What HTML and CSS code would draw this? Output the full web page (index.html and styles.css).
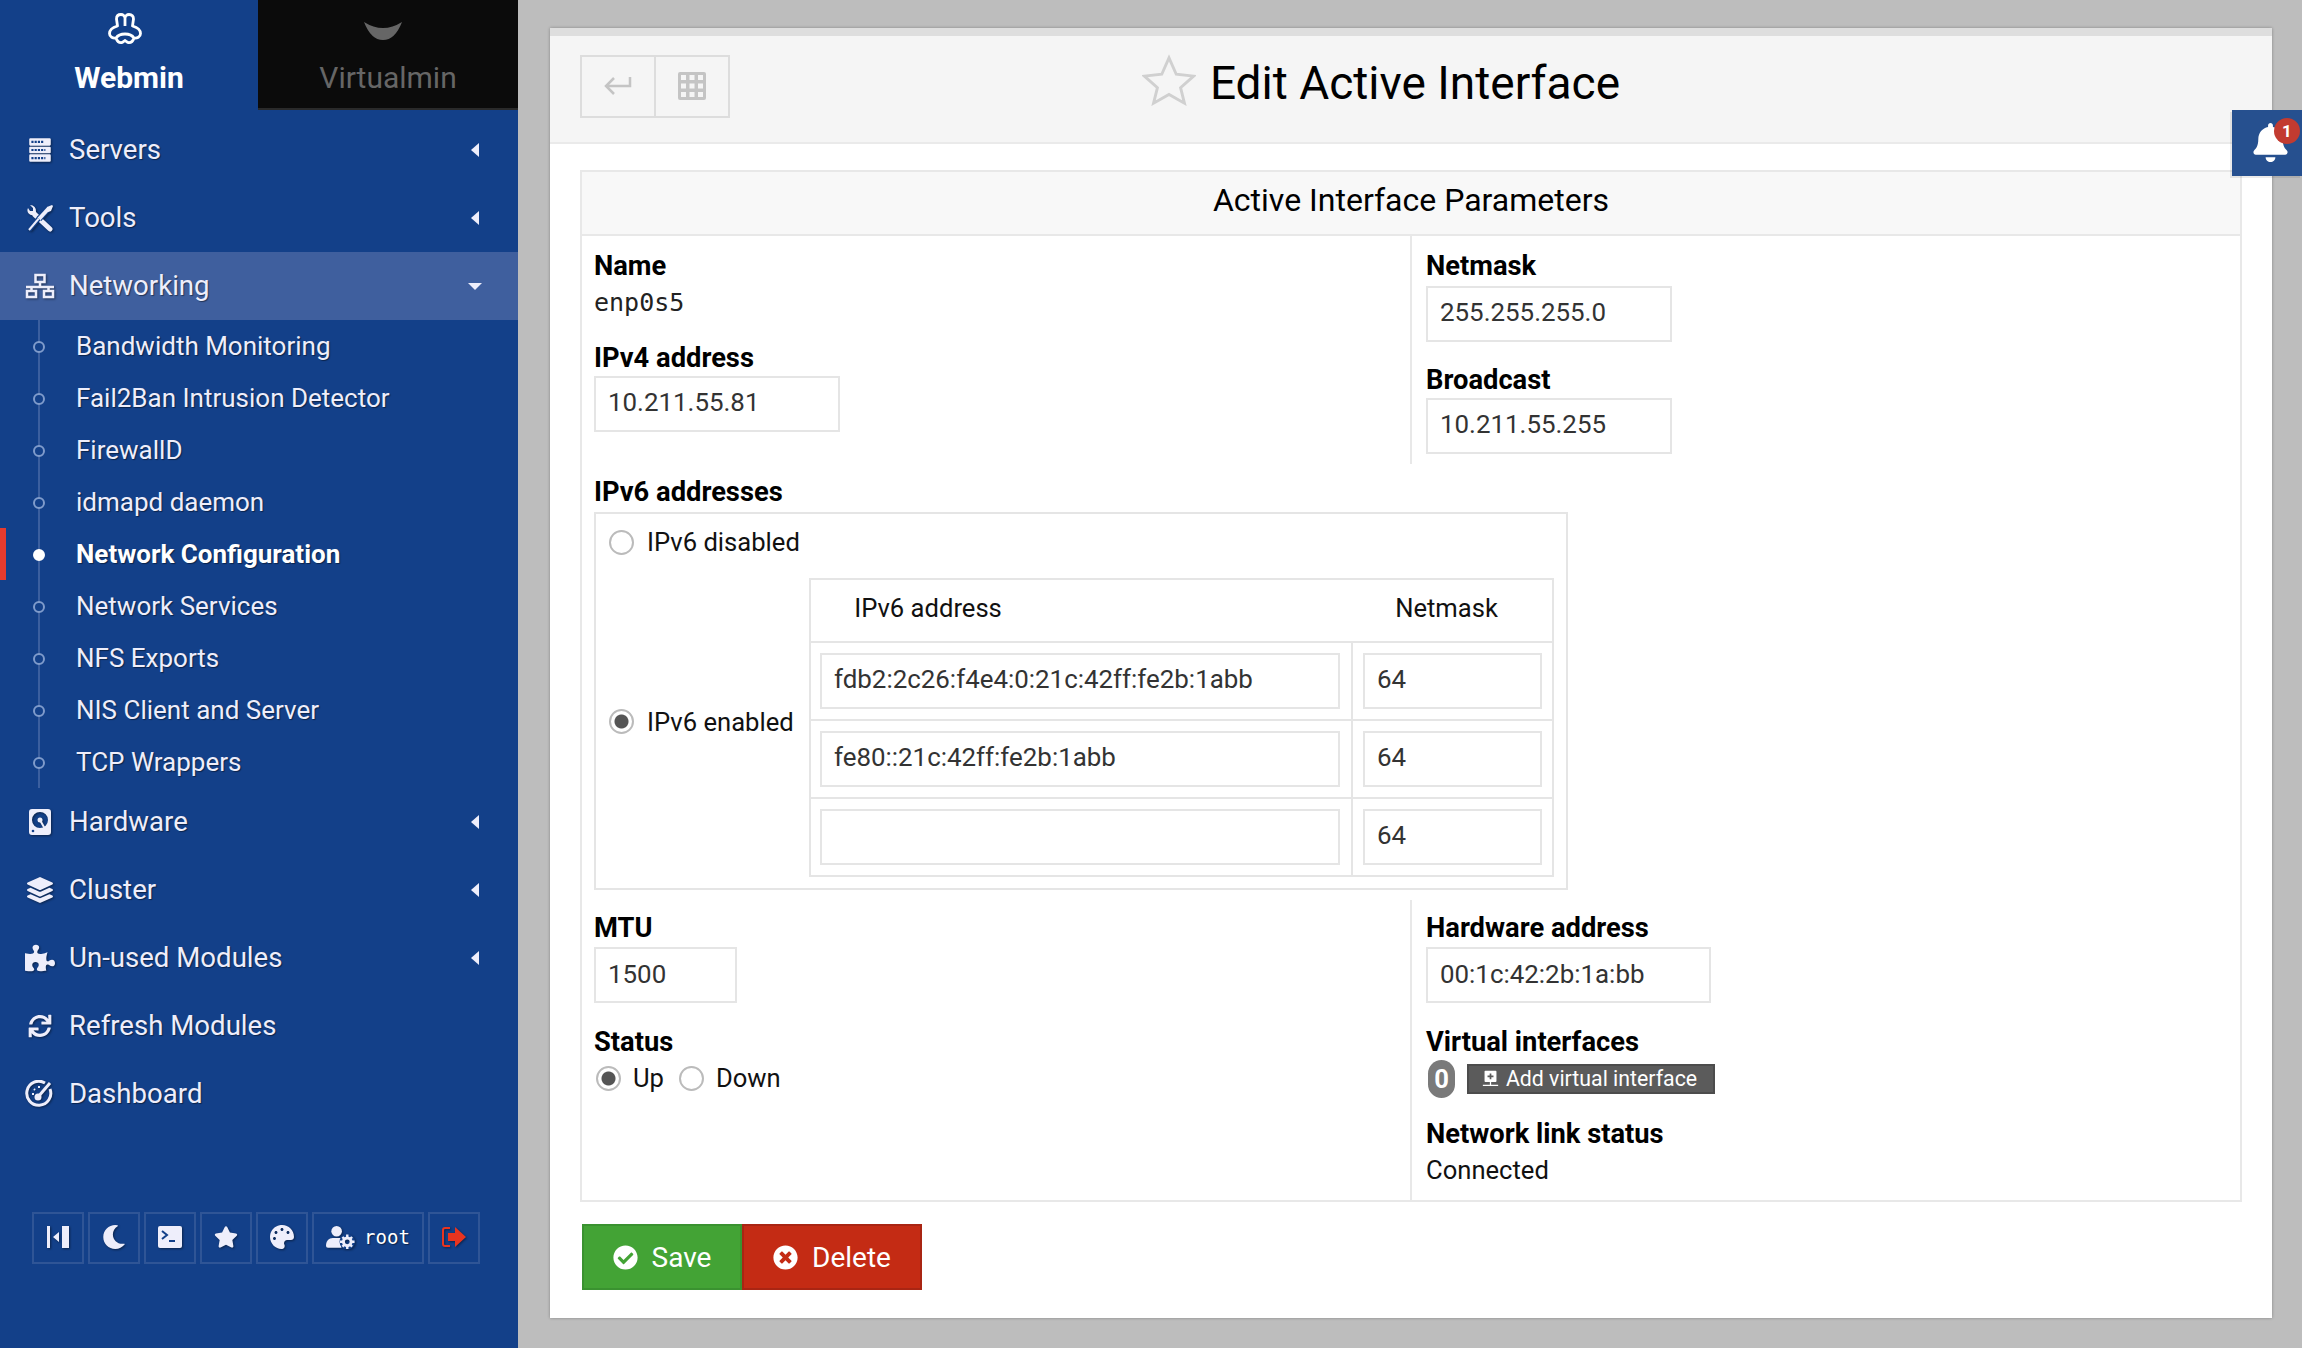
FILE: index.html
```html
<!DOCTYPE html>
<html lang="en">
<head>
    <meta charset="UTF-8">
    <title>Edit Active Interface</title>
    <link rel="stylesheet" href="styles.css">
</head>
<body>
    <aside class="sidebar">
        <div class="switch">
            <div class="switch-tab switch-active">
                <svg class="switch-logo" viewBox="0 0 34 32"><path d="M17 5C17 3 15 1.500 13 1.500C10 1.500 8.500 3.500 8.500 6L9.500 13C6 14 1.500 16 1.500 20.500C1.500 24 5 25.500 8 25C9 28 11 30 14 29.500C15.500 29 16 28 17 27.500C18 28 18.500 29 20 29.500C23 30 25 28 26 25C29 25.500 32.500 24 32.500 20.500C32.500 16 28 14 24.500 13L25.500 6C25.500 3.500 24 1.500 21 1.500C19 1.500 17 3 17 5zM17 5V13M8 25C10 22 13 21 17 21C21 21 24 22 26 25" fill="none" stroke="#fff" stroke-width="2.800" stroke-linejoin="round"/></svg>
                <span>Webmin</span>
            </div>
            <div class="switch-tab switch-other">
                <svg class="switch-logo" viewBox="0 0 38 18"><path d="M0 0Q19 12 38 0Q31 18 19 18Q7 18 0 0z" fill="#666"/></svg>
                <span>Virtualmin</span>
            </div>
        </div>

        <ul class="menu">
            <li class="menu-item">
                <svg class="menu-icon" viewBox="-1 -1 26 26"><path d="M3 1h18a1 1 0 0 1 1 1v5a1 1 0 0 1-1 1H3a1 1 0 0 1-1-1V2a1 1 0 0 1 1-1zm0 8h18a1 1 0 0 1 1 1v4a1 1 0 0 1-1 1H3a1 1 0 0 1-1-1v-4a1 1 0 0 1 1-1zm0 7h18a1 1 0 0 1 1 1v5a1 1 0 0 1-1 1H3a1 1 0 0 1-1-1v-5a1 1 0 0 1 1-1z" fill="currentColor"/><path d="M4 4.500h11M4 12h13M4 19.500h13" stroke="#134089" stroke-width="2" stroke-dasharray="2 1"/></svg>
                <span class="menu-label">Servers</span><i class="arrow-left"></i>
            </li>
            <li class="menu-item">
                <svg class="menu-icon" viewBox="0 0 28 28"><path d="M9 11L24 25" stroke="currentColor" stroke-width="5" stroke-linecap="round"/><path d="M2 4a5 5 0 0 0 6 7l4 3 2-2-4-4a6 6 0 0 0-6-7l3 3v3H4z" fill="currentColor"/><path d="M14 13L3 26" stroke="#134089" stroke-width="5"/><path d="M14 13L3 26" stroke="currentColor" stroke-width="2"/><path d="M13 15L23 4" stroke="#134089" stroke-width="6"/><path d="M13 15L23 4" stroke="currentColor" stroke-width="4"/><path d="M21 3l5-2 1 1-2 5-3 1z" fill="currentColor"/></svg>
                <span class="menu-label">Tools</span><i class="arrow-left"></i>
            </li>
            <li class="menu-item menu-open">
                <svg class="menu-icon" viewBox="0 0 30 26"><path d="M10.500 2h9v7h-9zM2 18h9v6H2zM19 18h9v6h-9zM15 9v5M1 14h28M6.500 14v4M23.500 14v4" fill="none" stroke="currentColor" stroke-width="2.500"/></svg>
                <span class="menu-label">Networking</span><i class="arrow-down"></i>
            </li>
            <li>
                <ul class="submenu">
                    <li class="submenu-item">Bandwidth Monitoring</li>
                    <li class="submenu-item">Fail2Ban Intrusion Detector</li>
                    <li class="submenu-item">FirewallD</li>
                    <li class="submenu-item">idmapd daemon</li>
                    <li class="submenu-item submenu-current">Network Configuration</li>
                    <li class="submenu-item">Network Services</li>
                    <li class="submenu-item">NFS Exports</li>
                    <li class="submenu-item">NIS Client and Server</li>
                    <li class="submenu-item">TCP Wrappers</li>
                </ul>
            </li>
            <li class="menu-item">
                <svg class="menu-icon" viewBox="-1 -1 24 28"><path d="M3 0h16a3 3 0 0 1 3 3v20a3 3 0 0 1-3 3H3a3 3 0 0 1-3-3V3a3 3 0 0 1 3-3zm8 3a8 8 0 1 0 0 16 8 8 0 0 0 0-16z" fill="currentColor" fill-rule="evenodd"/><circle cx="11" cy="11" r="2.500" fill="currentColor"/><path d="M11 11l5 9" stroke="currentColor" stroke-width="2"/><circle cx="4" cy="22" r="1.300" fill="#134089"/></svg>
                <span class="menu-label">Hardware</span><i class="arrow-left"></i>
            </li>
            <li class="menu-item">
                <svg class="menu-icon" viewBox="-20 -20 552 552"><path d="M12.410 148.020l232.940 105.670c6.800 3.090 14.490 3.090 21.290 0l232.940-105.670c16.550-7.510 16.550-32.520 0-40.030L266.650 2.310a25.607 25.607 0 0 0-21.290 0L12.410 107.980c-16.550 7.510-16.550 32.530 0 40.040zm487.180 88.280l-58.090-26.330-161.640 73.270c-7.560 3.430-15.590 5.170-23.860 5.170s-16.290-1.740-23.860-5.170L70.510 209.970l-58.100 26.330c-16.550 7.500-16.550 32.500 0 40l232.940 105.590c6.800 3.080 14.490 3.080 21.290 0L499.590 276.300c16.550-7.500 16.550-32.500 0-40zm0 127.800l-57.870-26.230-161.860 73.370c-7.560 3.430-15.590 5.170-23.860 5.170s-16.290-1.740-23.860-5.170L70.290 337.870 12.410 364.100c-16.550 7.500-16.550 32.500 0 40l232.940 105.590c6.800 3.080 14.490 3.080 21.290 0L499.590 404.100c16.550-7.500 16.550-32.500 0-40z" fill="currentColor"/></svg>
                <span class="menu-label">Cluster</span><i class="arrow-left"></i>
            </li>
            <li class="menu-item">
                <svg class="menu-icon" viewBox="0 0 576 512"><path d="M519.442 288.651c-41.519 0-59.500 31.593-82.058 31.593C377.409 320.244 432 144 432 144s-196.288 80-196.288-3.297c0-35.827 36.288-46.250 36.288-85.985C272 19.216 243.885 0 210.539 0c-34.654 0-66.366 18.891-66.366 56.346 0 41.364 31.711 59.277 31.711 81.750C175.885 207.719 0 166.758 0 166.758v333.237s178.635 41.047 178.635-28.662c0-22.473-40-40.107-40-81.471 0-37.456 29.250-56.346 63.577-56.346 33.673 0 61.788 19.216 61.788 54.717 0 39.735-36.288 50.158-36.288 85.985 0 60.803 129.675 25.730 181.230 25.730 0 0-34.725-120.101 25.827-120.101 35.962 0 46.423 36.152 86.308 36.152C556.712 416 576 387.990 576 354.443c0-34.199-18.962-65.792-56.558-65.792z" fill="currentColor"/></svg>
                <span class="menu-label">Un-used Modules</span><i class="arrow-left"></i>
            </li>
            <li class="menu-item">
                <svg class="menu-icon" viewBox="-60 -60 632 632"><path d="M440.650 12.570l4 82.770A247.160 247.160 0 0 0 255.830 8C134.730 8 33.910 94.920 12.290 209.820A12 12 0 0 0 24.090 224h49.050a12 12 0 0 0 11.670-9.260 175.910 175.910 0 0 1 317-56.940l-101.460-4.860a12 12 0 0 0-12.570 12v47.410a12 12 0 0 0 12 12H500a12 12 0 0 0 12-12V12a12 12 0 0 0-12-12h-47.370a12 12 0 0 0-11.980 12.570zM255.830 432a175.610 175.610 0 0 1-146-77.800l101.800 4.870a12 12 0 0 0 12.570-12v-47.400a12 12 0 0 0-12-12H12a12 12 0 0 0-12 12V500a12 12 0 0 0 12 12h47.350a12 12 0 0 0 12-12.600l-4.150-82.570A247.170 247.170 0 0 0 255.830 504c121.110 0 221.930-86.920 243.550-201.820a12 12 0 0 0-11.800-14.180h-49.050a12 12 0 0 0-11.670 9.260A175.860 175.860 0 0 1 255.830 432z" fill="currentColor"/></svg>
                <span class="menu-label">Refresh Modules</span>
            </li>
            <li class="menu-item">
                <svg class="menu-icon" viewBox="0 0 28 28"><path d="M24 9a12 12 0 1 1-5-6" fill="none" stroke="currentColor" stroke-width="3"/><path d="M12 17L24 3" stroke="currentColor" stroke-width="3"/><circle cx="12" cy="17" r="3.500" fill="currentColor"/><path d="M6 14h2M8 9l1 1M13 6v2" stroke="currentColor" stroke-width="2"/></svg>
                <span class="menu-label">Dashboard</span>
            </li>
        </ul>

        <div class="toolbar">
            <div class="tool">
                <svg class="tool-icon" viewBox="0 0 24 24"><path d="M1 1h3v22H1zM16 1h7v22h-7zM13 7v10L7 12z" fill="currentColor"/></svg>
            </div>
            <div class="tool">
                <svg class="tool-icon" viewBox="0 0 512 512"><path d="M283.211 512c78.962 0 151.079-35.925 198.857-94.792 7.068-8.708-.639-21.430-11.562-19.350-124.203 23.654-238.262-71.576-238.262-196.954 0-72.222 38.662-138.635 101.498-174.394 9.686-5.512 7.250-20.197-3.756-22.230A258.156 258.156 0 0 0 283.211 0c-141.309 0-256 114.511-256 256 0 141.309 114.511 256 256 256z" fill="currentColor"/></svg>
            </div>
            <div class="tool">
                <svg class="tool-icon" viewBox="0 0 24 24"><rect width="24" height="22" y="1" rx="2" fill="currentColor"/><path d="M4 6l5 4-5 4M11 16h6" fill="none" stroke="#134089" stroke-width="2"/></svg>
            </div>
            <div class="tool">
                <svg class="tool-icon" viewBox="0 0 576 512"><path d="M259.300 17.800L194 150.200 47.900 171.500c-26.200 3.800-36.700 36.100-17.700 54.600l105.700 103-25 145.500c-4.500 26.300 23.200 46 46.400 33.700L288 439.600l130.700 68.700c23.200 12.200 50.900-7.400 46.400-33.700l-25-145.500 105.700-103c19-18.500 8.500-50.800-17.700-54.600L382 150.200 316.700 17.800c-11.700-23.600-45.600-23.900-57.400 0z" fill="currentColor"/></svg>
            </div>
            <div class="tool">
                <svg class="tool-icon" viewBox="0 0 512 512"><path d="M204.300 5C104.900 24.400 24.800 104.300 5.200 203.400c-37 187 131.700 326.400 258.800 306.700 41.200-6.400 61.400-54.600 42.500-91.700-23.100-45.400 9.900-98.400 60.900-98.400h79.700c35.800 0 64.800-29.600 64.900-65.300C511.500 97.100 368.100-26.900 204.300 5zM96 320c-17.700 0-32-14.300-32-32s14.300-32 32-32 32 14.300 32 32-14.300 32-32 32zm32-128c-17.700 0-32-14.300-32-32s14.300-32 32-32 32 14.300 32 32-14.300 32-32 32zm128-64c-17.700 0-32-14.300-32-32s14.300-32 32-32 32 14.300 32 32-14.300 32-32 32zm128 64c-17.700 0-32-14.300-32-32s14.300-32 32-32 32 14.300 32 32-14.300 32-32 32z" fill="currentColor"/></svg>
            </div>
            <div class="tool tool-user">
                <svg class="tool-user-icon" viewBox="0 0 30 24"><circle cx="11" cy="6" r="5.500" fill="currentColor"/><path d="M0 21c0-5 3-8 7-8h7c1 0 2 .5 2 1v9H2a2 2 0 0 1-2-2z" fill="currentColor"/><circle cx="22" cy="17" r="5.500" fill="none" stroke="#134089" stroke-width="5"/><circle cx="22" cy="17" r="4" fill="none" stroke="currentColor" stroke-width="3"/><path d="M22 9.500v3M22 21.500v3M14.500 17h3M26.500 17h3M17 12l2 2M25 20l2 2M27 12l-2 2M19 20l-2 2" stroke="currentColor" stroke-width="2.500"/></svg>
                <span class="tool-name">root</span>
            </div>
            <div class="tool">
                <svg class="tool-icon tool-logout" viewBox="0 0 24 24"><path d="M8 3H3a2 2 0 0 0-2 2v14a2 2 0 0 0 2 2h5" fill="none" stroke="currentColor" stroke-width="2"/><path d="M6 8h7V2l11 10-11 10v-6H6z" fill="currentColor"/></svg>
            </div>
        </div>
    </aside>

    <main class="main">
        <div class="panel">
            <header class="panel-head">
                <div class="head-left">
                    <div class="head-buttons">
                        <div class="head-button">
                            <svg class="head-icon" viewBox="0 0 28 20"><path d="M26 1v9H3M10 2L2 10l8 8" fill="none" stroke="#c4c4c4" stroke-width="2.500"/></svg>
                        </div>
                        <div class="head-button">
                            <svg class="head-icon" viewBox="0 0 28 28"><rect width="28" height="28" rx="2" fill="#c4c4c4"/><path d="M3 3h5v5H3zM11.500 3h5v5h-5zM20 3h5v5h-5zM3 11.500h5v5H3zM11.500 11.500h5v5h-5zM20 11.500h5v5h-5zM3 20h5v5H3zM11.500 20h5v5h-5zM20 20h5v5h-5z" fill="#f5f5f5"/></svg>
                        </div>
                    </div>
                    <svg class="head-star" viewBox="0 0 56 52"><path d="M28 3l7.500 17 18 2-13.500 12 4 16-16-9-16 9 4-16L2.500 22l18-2z" fill="none" stroke="#d0d0d0" stroke-width="3"/></svg>
                </div>
                <h1 class="page-title">Edit Active Interface</h1>
                <div></div>
            </header>

            <div class="panel-body">
                <form class="form-box">
                    <h2 class="form-title">Active Interface Parameters</h2>

                    <div class="form-row form-row-top">
                        <div class="form-col">
                            <div class="field">
                                <div class="field-label">Name</div>
                                <div class="field-mono">enp0s5</div>
                            </div>
                            <div class="field">
                                <div class="field-label">IPv4 address</div>
                                <input class="text-input input-ip" type="text" value="10.211.55.81">
                            </div>
                        </div>
                        <div class="form-col form-col-right">
                            <div class="field field-wide">
                                <div class="field-label field-label-tight">Netmask</div>
                                <input class="text-input input-ip" type="text" value="255.255.255.0">
                            </div>
                            <div class="field">
                                <div class="field-label">Broadcast</div>
                                <input class="text-input input-ip" type="text" value="10.211.55.255">
                            </div>
                        </div>
                    </div>

                    <div class="ipv6-section">
                        <div class="field-label field-label-tight">IPv6 addresses</div>
                        <div class="ipv6-box">
                            <label class="radio-line ipv6-off"><input class="radio" type="radio" name="ipv6">IPv6 disabled</label>
                            <div class="ipv6-on">
                                <label class="radio-line ipv6-enabled"><input class="radio" type="radio" name="ipv6" checked>IPv6 enabled</label>
                                <table class="ipv6-table">
                                    <thead>
                                        <tr>
                                            <th class="col-address">IPv6 address</th>
                                            <th class="col-netmask">Netmask</th>
                                        </tr>
                                    </thead>
                                    <tbody>
                                        <tr>
                                            <td><input class="text-input input-full" type="text" value="fdb2:2c26:f4e4:0:21c:42ff:fe2b:1abb"></td>
                                            <td><input class="text-input input-full" type="text" value="64"></td>
                                        </tr>
                                        <tr>
                                            <td><input class="text-input input-full" type="text" value="fe80::21c:42ff:fe2b:1abb"></td>
                                            <td><input class="text-input input-full" type="text" value="64"></td>
                                        </tr>
                                        <tr>
                                            <td><input class="text-input input-full" type="text" value=""></td>
                                            <td><input class="text-input input-full" type="text" value="64"></td>
                                        </tr>
                                    </tbody>
                                </table>
                            </div>
                        </div>
                    </div>

                    <div class="form-row form-row-bottom">
                        <div class="form-col">
                            <div class="field">
                                <div class="field-label field-label-input">MTU</div>
                                <input class="text-input input-mtu" type="text" value="1500">
                            </div>
                            <div class="field">
                                <div class="field-label">Status</div>
                                <div class="radio-group">
                                    <label class="radio-line"><input class="radio" type="radio" name="status" checked>Up</label>
                                    <label class="radio-line"><input class="radio" type="radio" name="status">Down</label>
                                </div>
                            </div>
                        </div>
                        <div class="form-col form-col-right">
                            <div class="field">
                                <div class="field-label field-label-input">Hardware address</div>
                                <input class="text-input input-mac" type="text" value="00:1c:42:2b:1a:bb">
                            </div>
                            <div class="field field-virtual">
                                <div class="field-label">Virtual interfaces</div>
                                <div class="virtual-line">
                                    <span class="count-badge">0</span>
                                    <span class="small-button">
                                        <svg class="small-icon" viewBox="0 0 20 20"><path d="M4 1h12a1 1 0 0 1 1 1v11a1 1 0 0 1-1 1H4a1 1 0 0 1-1-1V2a1 1 0 0 1 1-1z" fill="#fff"/><path d="M10 4v7M6.500 7.500h7" stroke="#5b5b5b" stroke-width="2"/><path d="M10 14v4M1 18h18" stroke="#fff" stroke-width="1.500"/></svg>
                                        Add virtual interface
                                    </span>
                                </div>
                            </div>
                            <div class="field">
                                <div class="field-label">Network link status</div>
                                <div class="field-value">Connected</div>
                            </div>
                        </div>
                    </div>
                </form>

                <div class="actions">
                    <button class="action action-save" type="button">
                        <svg class="action-icon" viewBox="0 0 512 512"><path d="M504 256c0 136.967-111.033 248-248 248S8 392.967 8 256 119.033 8 256 8s248 111.033 248 248zM227.314 387.314l184-184c6.248-6.248 6.248-16.379 0-22.627l-22.627-22.627c-6.248-6.249-16.379-6.249-22.628 0L216 308.118l-70.059-70.059c-6.248-6.248-16.379-6.248-22.628 0l-22.627 22.627c-6.248 6.248-6.248 16.379 0 22.627l104 104c6.249 6.249 16.379 6.249 22.628.001z" fill="#fff"/></svg>
                        Save
                    </button>
                    <button class="action action-delete" type="button">
                        <svg class="action-icon" viewBox="0 0 512 512"><path d="M256 8C119 8 8 119 8 256s111 248 248 248 248-111 248-248S393 8 256 8zm121.600 313.100c4.700 4.700 4.700 12.300 0 17L338 377.600c-4.700 4.700-12.300 4.700-17 0L256 312l-65.100 65.600c-4.700 4.700-12.300 4.700-17 0L134.400 338c-4.700-4.700-4.700-12.300 0-17l65.600-65-65.600-65.100c-4.700-4.700-4.700-12.300 0-17l39.600-39.600c4.700-4.700 12.300-4.700 17 0l65 65.700 65.100-65.600c4.700-4.700 12.300-4.700 17 0l39.600 39.600c4.700 4.700 4.700 12.300 0 17L312 256l65.600 65.100z" fill="#fff"/></svg>
                        Delete
                    </button>
                </div>
            </div>
        </div>
    </main>

    <div class="notify">
        <svg class="notify-bell" viewBox="0 0 448 512"><path d="M224 512c35.320 0 63.970-28.650 63.970-64H160.030c0 35.350 28.650 64 63.970 64zm215.390-149.710c-19.320-20.760-55.470-51.990-55.470-154.290 0-77.700-54.480-139.900-127.940-155.160V32c0-17.670-14.320-32-31.980-32s-31.980 14.330-31.980 32v20.840C118.560 68.100 64.080 130.300 64.080 208c0 102.300-36.150 133.530-55.470 154.290-6 6.450-8.660 14.160-8.610 21.710.11 16.400 12.980 32 32.100 32h383.800c19.120 0 32-15.600 32.100-32 .05-7.550-2.610-15.270-8.610-21.710z" fill="#fff"/></svg>
        <span class="notify-count">1</span>
    </div>
</body>
</html>
```

FILE: styles.css
```css
* {
    box-sizing: border-box;
}

html, body {
    height: 100%;
}

body {
    margin: 0;
    display: flex;
    overflow: hidden;
    background-color: #bdbdbd;
    font-family: Roboto, sans-serif;
    font-size: 25.6px;
    color: #111;
}

/* Sidebar */
.sidebar {
    width: 518px;
    flex-shrink: 0;
    background-color: #134089;
    color: #eeeefb;
    text-shadow: 1px 1px 1px rgba(0, 0, 0, 0.45);
}

.switch {
    display: flex;
    height: 110px;
    margin-bottom: 6px;
}

.switch-tab {
    display: flex;
    flex-direction: column;
    align-items: center;
    font-size: 30px;
    text-shadow: none;
}

.switch-active {
    width: 258px;
    font-weight: 700;
    color: #fff;
}

.switch-active .switch-logo {
    width: 34px;
    height: 32px;
    margin-top: 13px;
    margin-bottom: 15px;
    margin-left: -9px;
}

.switch-other {
    width: 260px;
    background-color: #0b0b0b;
    border-bottom: 2px solid #2a2a2a;
    color: #666;
}

.switch-other .switch-logo {
    width: 38px;
    height: 18px;
    margin-top: 22px;
    margin-bottom: 20px;
    margin-left: -10px;
}

.menu, .submenu {
    list-style: none;
    margin: 0;
    padding: 0;
}

.menu-item {
    height: 68px;
    display: flex;
    align-items: center;
    padding-left: 25px;
    padding-right: 39px;
    font-size: 27.6px;
}

.menu-open {
    background-color: #3f5f9e;
}

.menu-icon {
    width: 30px;
    height: 28px;
    margin-right: 14px;
    flex-shrink: 0;
    filter: drop-shadow(1px 1px 1px rgba(0, 0, 0, 0.45));
}

.menu-label {
    flex: 1;
    padding-bottom: 2px;
}

.arrow-left {
    width: 0;
    height: 0;
    border-top: 7px solid transparent;
    border-bottom: 7px solid transparent;
    border-right: 8px solid #eeeefb;
}

.arrow-down {
    width: 0;
    height: 0;
    margin-right: -3px;
    border-left: 7px solid transparent;
    border-right: 7px solid transparent;
    border-top: 7px solid #eeeefb;
}

.submenu-item {
    position: relative;
    height: 52px;
    line-height: 52px;
    padding-left: 76px;
    font-size: 26px;
}

/* tree line and dot */
.submenu-item::before {
    content: "";
    position: absolute;
    left: 38px;
    top: 0;
    bottom: 0;
    width: 2px;
    background-color: #3b5f9f;
}

.submenu-item::after {
    content: "";
    position: absolute;
    left: 33px;
    top: 21px;
    width: 8px;
    height: 8px;
    border: 2px solid #7f9bcb;
    border-radius: 50%;
    background-color: #134089;
}

.submenu-current {
    font-weight: 700;
    color: #fff;
    box-shadow: inset 6px 0 0 #e63b2e;
}

.submenu-current::after {
    background-color: #fff;
    border-color: #fff;
}

.toolbar {
    display: flex;
    gap: 4px;
    margin-top: 84px;
    padding-left: 32px;
}

.tool {
    width: 52px;
    height: 52px;
    display: flex;
    align-items: center;
    justify-content: center;
    padding-bottom: 2px;
    border: 2px solid #2f5596;
}

.tool-user {
    width: 112px;
    gap: 9px;
}

.tool-icon {
    width: 24px;
    height: 24px;
    filter: drop-shadow(1px 1px 1px rgba(0, 0, 0, 0.45));
}

.tool-user-icon {
    width: 29px;
    height: 24px;
    flex-shrink: 0;
    filter: drop-shadow(1px 1px 1px rgba(0, 0, 0, 0.45));
}

.tool-logout {
    color: #e8341f;
}

.tool-name {
    font-family: "DejaVu Sans Mono", monospace;
    font-size: 19px;
    color: #fff;
}

/* Main panel */
.main {
    flex: 1;
    padding: 28px 30px 30px 32px;
}

.panel {
    height: 100%;
    background-color: #fff;
    border-top: 8px solid #dedede;
    box-shadow: 0 0 3px rgba(0, 0, 0, 0.3);
}

.panel-head {
    height: 108px;
    display: grid;
    grid-template-columns: 1fr auto 1fr;
    column-gap: 16px;
    align-items: center;
    padding: 0 30px 6px;
    background-color: #f5f5f5;
    border-bottom: 2px solid #eaeaea;
}

.head-left {
    display: flex;
    justify-content: space-between;
    align-items: center;
}

.head-buttons {
    display: flex;
}

.head-button {
    width: 76px;
    height: 63px;
    display: flex;
    align-items: center;
    justify-content: center;
    border: 2px solid #dddddd;
}

.head-button + .head-button {
    margin-left: -2px;
}

.head-icon {
    width: 28px;
    height: 28px;
}

.head-star {
    width: 54px;
    height: 52px;
    margin-right: -10px;
    margin-bottom: 12px;
}

.page-title {
    margin: 0 0 6px 8px;
    font-size: 46px;
    font-weight: 400;
    color: #000;
}

.panel-body {
    padding: 26px 30px 0;
}

.form-box {
    border: 2px solid #e8e8e8;
    height: 1032px;
}

.form-title {
    height: 64px;
    margin: 0;
    line-height: 57px;
    text-align: center;
    font-size: 32px;
    font-weight: 400;
    color: #000;
    background-color: #f8f8f8;
    border-bottom: 2px solid #e8e8e8;
}

.form-row {
    display: flex;
}

.form-row-top {
    height: 228px;
}

.form-row-top .form-col {
    padding-top: 12px;
}

.form-row-bottom {
    height: 300px;
    margin-top: 10px;
}

.form-row-bottom .form-col {
    padding-top: 10px;
}

.form-col {
    width: 828px;
    padding-left: 12px;
}

.form-col-right {
    flex: 1;
    border-left: 2px solid #e8e8e8;
    padding-left: 14px;
}

.field-label {
    height: 36px;
    line-height: 36px;
    font-size: 27.3px;
    font-weight: 700;
    color: #000;
}

.field-label-tight {
    margin-bottom: 2px;
}

.field-label-input {
    margin-bottom: 1px;
}

.field {
    margin-bottom: 21px;
}

.form-row-top .field {
    margin-bottom: 19px;
}

.form-row-top .field-wide {
    margin-bottom: 20px;
}

.field-mono {
    height: 36px;
    line-height: 36px;
    margin-top: 1px;
    font-family: "DejaVu Sans Mono", monospace;
    font-size: 25px;
    color: #222;
}

.field-value {
    height: 36px;
    line-height: 36px;
    color: #111;
}

.field-virtual {
    margin-bottom: 18px;
}

.text-input {
    display: block;
    height: 56px;
    padding: 0 12px 3px;
    border: 2px solid #e5e5e5;
    border-radius: 0;
    background-color: #fff;
    font-family: Roboto, sans-serif;
    font-size: 25.9px;
    color: #333;
    outline: none;
}

.input-ip {
    width: 246px;
    padding-bottom: 5px;
}

.input-mtu {
    width: 143px;
}

.input-mac {
    width: 285px;
}

.input-full {
    width: 100%;
    padding-bottom: 5px;
}

/* IPv6 block */
.ipv6-section {
    padding: 10px 0 0 12px;
}

.ipv6-box {
    width: 974px;
    height: 378px;
    padding: 10px 12px 9px 13px;
    border: 2px solid #e5e5e5;
}

.ipv6-off {
    height: 36px;
    margin-bottom: 18px;
}

.ipv6-on {
    display: flex;
    align-items: center;
    justify-content: space-between;
}

.ipv6-enabled {
    margin-bottom: 12px;
}

.radio-line {
    display: flex;
    align-items: center;
    gap: 13px;
    color: #111;
}

.radio {
    appearance: none;
    width: 25px;
    height: 25px;
    margin: 0;
    flex-shrink: 0;
    border: 2px solid #bbbbbb;
    border-radius: 50%;
    background-color: #fff;
}

.radio:checked {
    background-image: radial-gradient(circle, #555 0, #555 6.5px, #fff 7.5px);
}

.radio-group {
    display: flex;
    height: 36px;
    gap: 15px;
    padding-left: 2px;
}

.radio-group .radio-line {
    gap: 12px;
}

.ipv6-table {
    width: 745px;
    height: 299px;
    border-collapse: collapse;
    border: 2px solid #e5e5e5;
}

.ipv6-table td {
    height: 78px;
    padding: 0 10px;
    border: 2px solid #e5e5e5;
}

.ipv6-table td:first-child {
    padding: 0 11px 0 9px;
}

.ipv6-table th {
    height: 63px;
    padding-bottom: 6px;
    font-weight: 400;
    color: #111;
}

.col-address {
    width: 542px;
    padding-right: 308px;
}

.col-netmask {
    text-align: center;
    padding-right: 12px;
}

/* Virtual interfaces */
.virtual-line {
    display: flex;
    align-items: center;
    height: 38px;
    gap: 12px;
    padding-left: 2px;
}

.count-badge {
    width: 27px;
    height: 38px;
    border-radius: 14px;
    background-color: #7a7a7a;
    color: #fff;
    font-weight: 700;
    text-align: center;
    line-height: 38px;
}

.small-button {
    width: 248px;
    height: 30px;
    display: flex;
    align-items: center;
    justify-content: center;
    gap: 7px;
    padding-right: 3px;
    padding-bottom: 1px;
    background-color: #5b5b5b;
    border: 2px solid #4c4c4c;
    color: #fff;
    font-size: 21.3px;
}

.small-icon {
    width: 17px;
    height: 17px;
}

/* Save and Delete */
.actions {
    display: flex;
    margin-top: 22px;
    padding-left: 2px;
}

.action {
    height: 66px;
    display: flex;
    align-items: center;
    justify-content: center;
    gap: 14px;
    border: 2px solid;
    color: #fff;
    font-family: Roboto, sans-serif;
    font-size: 28px;
}

.action-icon {
    width: 25px;
    height: 25px;
}

.action-save {
    width: 160px;
    background-color: #43a335;
    border-color: #3a9230;
}

.action-delete {
    width: 180px;
    background-color: #c42b14;
    border-color: #a92513;
}

/* Bell, sits over the panel */
.notify {
    position: absolute;
    top: 110px;
    right: 0;
    width: 70px;
    height: 66px;
    background-color: #26508f;
    box-shadow: -2px 2px 0 rgba(0, 0, 0, 0.08);
}

.notify-bell {
    position: absolute;
    left: 21px;
    top: 13px;
    width: 35px;
    height: 39px;
}

.notify-count {
    position: absolute;
    left: 42px;
    top: 8px;
    width: 26px;
    height: 26px;
    border-radius: 50%;
    background-color: #c23b30;
    color: #fff;
    font-size: 17px;
    font-weight: 700;
    line-height: 26px;
    text-align: center;
}
```
